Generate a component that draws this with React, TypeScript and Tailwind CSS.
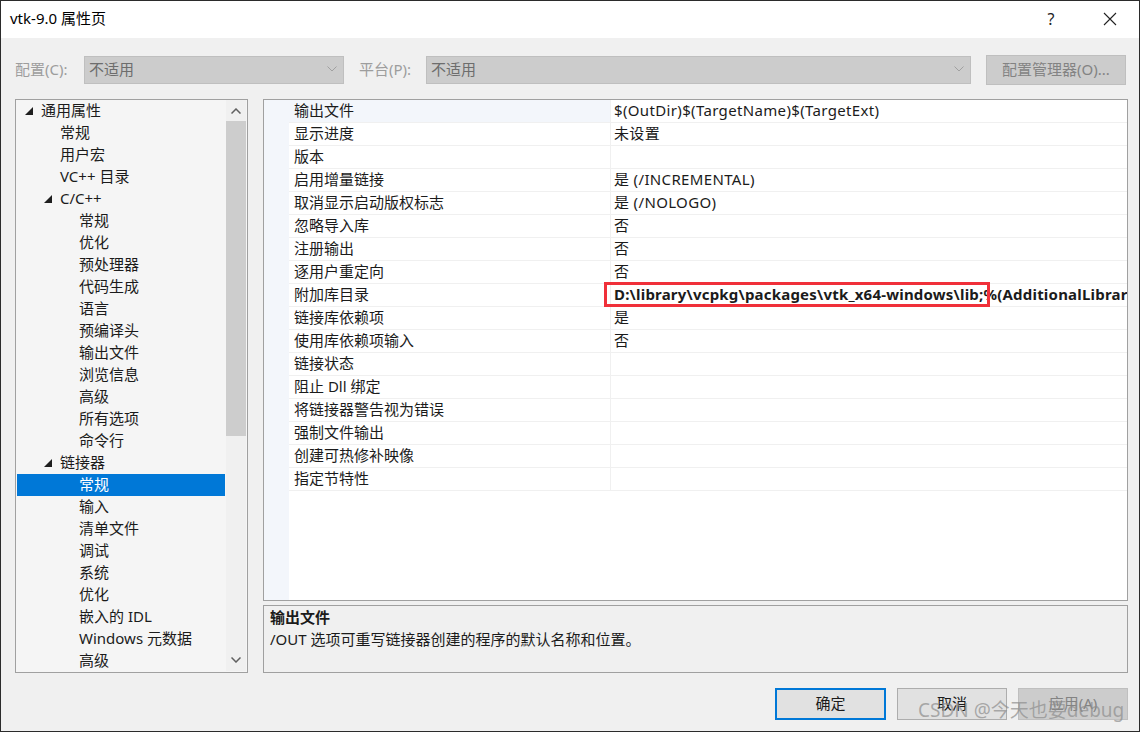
import React from "react";

const FONT = "font-['Noto_Sans','Noto_Sans_CJK_SC',sans-serif]";

type TreeItem = { label: string; level: number; expand?: boolean; selected?: boolean };

const tree: TreeItem[] = [
  { label: "通用属性", level: 0, expand: true },
  { label: "常规", level: 1 },
  { label: "用户宏", level: 1 },
  { label: "VC++ 目录", level: 1 },
  { label: "C/C++", level: 1, expand: true },
  { label: "常规", level: 2 },
  { label: "优化", level: 2 },
  { label: "预处理器", level: 2 },
  { label: "代码生成", level: 2 },
  { label: "语言", level: 2 },
  { label: "预编译头", level: 2 },
  { label: "输出文件", level: 2 },
  { label: "浏览信息", level: 2 },
  { label: "高级", level: 2 },
  { label: "所有选项", level: 2 },
  { label: "命令行", level: 2 },
  { label: "链接器", level: 1, expand: true },
  { label: "常规", level: 2, selected: true },
  { label: "输入", level: 2 },
  { label: "清单文件", level: 2 },
  { label: "调试", level: 2 },
  { label: "系统", level: 2 },
  { label: "优化", level: 2 },
  { label: "嵌入的 IDL", level: 2 },
  { label: "Windows 元数据", level: 2 },
  { label: "高级", level: 2 },
];

const props: { name: string; value: string; bold?: boolean; box?: boolean }[] = [
  { name: "输出文件", value: "$(OutDir)$(TargetName)$(TargetExt)" },
  { name: "显示进度", value: "未设置" },
  { name: "版本", value: "" },
  { name: "启用增量链接", value: "是 (/INCREMENTAL)" },
  { name: "取消显示启动版权标志", value: "是 (/NOLOGO)" },
  { name: "忽略导入库", value: "否" },
  { name: "注册输出", value: "否" },
  { name: "逐用户重定向", value: "否" },
  { name: "附加库目录", value: "D:\\library\\vcpkg\\packages\\vtk_x64-windows\\lib;%(AdditionalLibraryDirectories)", bold: true, box: true },
  { name: "链接库依赖项", value: "是" },
  { name: "使用库依赖项输入", value: "否" },
  { name: "链接状态", value: "" },
  { name: "阻止 Dll 绑定", value: "" },
  { name: "将链接器警告视为错误", value: "" },
  { name: "强制文件输出", value: "" },
  { name: "创建可热修补映像", value: "" },
  { name: "指定节特性", value: "" },
];

function Tri() {
  return (
    <svg width="8" height="8" viewBox="0 0 8 8" className="shrink-0">
      <polygon points="8,0 8,8 0,8" fill="#1e1e1e" />
    </svg>
  );
}

function Chevron({ color = "#a0a0a0" }: { color?: string }) {
  return (
    <svg width="10" height="6" viewBox="0 0 10 6">
      <polyline points="0.5,0.5 5,5 9.5,0.5" fill="none" stroke={color} strokeWidth="1" />
    </svg>
  );
}

export default function App() {
  return (
    <div className={`${FONT} relative w-[1140px] h-[732px] border border-[#2b2b2b] bg-[#f0f0f0] flex flex-col text-[15px] text-[#1b1b1b] overflow-hidden`}>
      {/* Title bar */}
      <div className="h-[37px] bg-white flex items-center justify-between pl-[9px] pb-[2px] shrink-0">
        <span className="text-[15px] text-black leading-none">vtk-9.0 属性页</span>
        <div className="flex items-center h-full">
          <span className="w-[60px] text-center text-[16px] text-[#222]">?</span>
          <span className="w-[58px] flex justify-center">
            <svg width="14" height="14" viewBox="0 0 14 14">
              <path d="M1 1 L13 13 M13 1 L1 13" stroke="#222" strokeWidth="1.1" />
            </svg>
          </span>
        </div>
      </div>

      {/* Config row */}
      <div className="flex items-center mt-[17px] pl-[14px] h-[30px] shrink-0">
        <span className="w-[69px] text-[#9d9d9d] leading-none pb-[2px]">配置(C):</span>
        <div className="w-[260px] h-[28px] bg-[#cccccc] border border-[#bfbfbf] flex items-center justify-between pl-[4px] pr-[6px] pb-[2px]">
          <span className="text-[#6d6d6d] leading-none">不适用</span>
          <Chevron />
        </div>
        <span className="ml-[15px] w-[67px] text-[#9d9d9d] leading-none pb-[2px]">平台(P):</span>
        <div className="w-[545px] h-[28px] bg-[#cccccc] border border-[#bfbfbf] flex items-center justify-between pl-[4px] pr-[6px] pb-[2px]">
          <span className="text-[#6d6d6d] leading-none">不适用</span>
          <Chevron />
        </div>
        <div className="ml-[15px] w-[140px] h-[30px] bg-[#cccccc] border border-[#bfbfbf] flex items-center justify-center text-[#838383] pb-[2px]">
          配置管理器(O)...
        </div>
      </div>

      {/* Main */}
      <div className="flex mt-[14px] pl-[14px] h-[574px] shrink-0">
        {/* Tree */}
        <div className="w-[233px] h-[574px] border border-[#a0a0a0] bg-[#f5f5f5] flex px-[1px] pb-[1px]">
          <div className="flex-1 flex flex-col overflow-hidden">
            {tree.map((t, i) => (
              <div
                key={i}
                className={`h-[22px] shrink-0 flex items-center leading-none pb-[2px] ${t.selected ? "bg-[#0078d7] text-white" : ""}`}
              >
                <div
                  className={`flex items-center pt-[2px] ${t.level === 0 ? "w-[24px] pl-[8px]" : t.level === 1 ? "w-[43px] pl-[27px]" : "w-[62px]"}`}
                >
                  {t.expand ? <Tri /> : null}
                </div>
                <span className="whitespace-nowrap">{t.label}</span>
              </div>
            ))}
          </div>
          {/* Scrollbar */}
          <div className="w-[20px] ml-[1px] flex flex-col bg-[#f0f0f0]">
            <div className="h-[21px] flex items-center justify-center">
              <svg width="10" height="6" viewBox="0 0 10 6">
                <polyline points="0.5,5.5 5,1 9.5,5.5" fill="none" stroke="#606060" strokeWidth="1.5" />
              </svg>
            </div>
            <div className="h-[315px] bg-[#cdcdcd]" />
            <div className="flex-1" />
            <div className="h-[22px] flex items-center justify-center">
              <svg width="10" height="6" viewBox="0 0 10 6">
                <polyline points="0.5,0.5 5,5 9.5,0.5" fill="none" stroke="#606060" strokeWidth="1.5" />
              </svg>
            </div>
          </div>
        </div>

        {/* Right column */}
        <div className="ml-[15px] w-[865px] flex flex-col">
          <div className="h-[502px] border border-[#a0a0a0] bg-white flex">
            <div className="w-[25px] bg-[#f3f6fb] shrink-0" />
            <div className="flex-1 flex flex-col overflow-hidden">
              {props.map((p, i) => (
                <div key={i} className="h-[23px] shrink-0 flex border-b border-[#f0f0f0]">
                  <div
                    className={`w-[322px] shrink-0 pl-[5px] pb-[2px] flex items-center leading-none border-r border-[#f0f0f0] ${i === 0 ? "bg-[#f3f6fb]" : ""}`}
                  >
                    {p.name}
                  </div>
                  <div className="relative flex-1 pl-[3px] pb-[2px] flex items-center leading-none whitespace-nowrap overflow-visible">
                    <span className={p.bold ? "font-bold tracking-[0.2px]" : "tracking-[0.35px]"}>{p.value}</span>
                    {p.box ? (
                      <div className="absolute left-[-7px] top-[-2px] w-[386px] h-[25px] border-[3px] border-[#f0303a]" />
                    ) : null}
                  </div>
                </div>
              ))}
            </div>
          </div>
          <div className="mt-[4px] h-[68px] border border-[#a0a0a0] bg-[#f0f0f0] pl-[6px] flex flex-col">
            <span className="font-bold h-[22px] leading-[22px]">输出文件</span>
            <span className="h-[22px] leading-[22px]">/OUT 选项可重写链接器创建的程序的默认名称和位置。</span>
          </div>
        </div>
      </div>

      {/* Buttons */}
      <div className="flex justify-end pr-[11px] mt-[15px] gap-[11px]">
        <div className="w-[111px] h-[32px] border-2 border-[#0078d7] bg-[#e1e1e1] flex items-center justify-center pb-[2px]">确定</div>
        <div className="w-[110px] h-[32px] border border-[#adadad] bg-[#e1e1e1] flex items-center justify-center pb-[2px]">取消</div>
        <div className="w-[110px] h-[32px] border border-[#bfbfbf] bg-[#cccccc] flex items-center justify-center text-[#838383] pb-[2px]">应用(A)</div>
      </div>

      {/* Watermark */}
      <div className="absolute left-[917px] top-[700px] text-[19px] leading-none text-[#8c8c8c]/70 whitespace-nowrap">
        CSDN @今天也要debug
      </div>
    </div>
  );
}
